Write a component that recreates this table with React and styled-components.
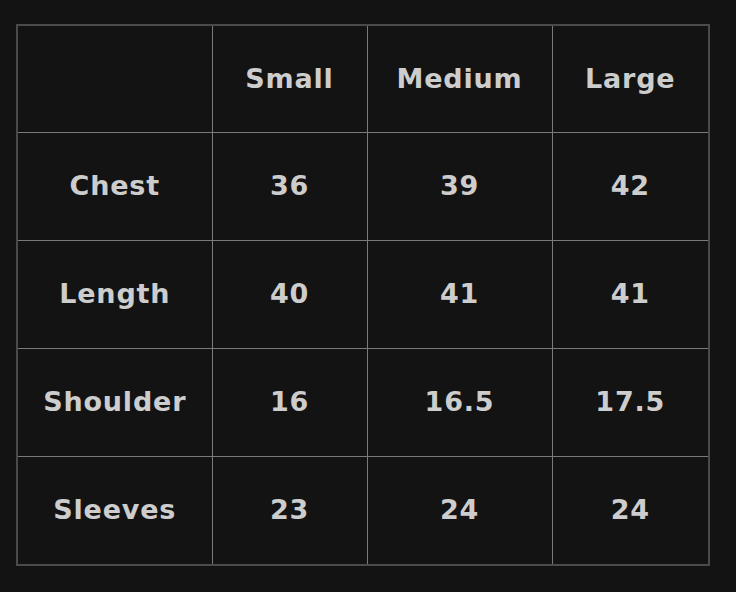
import styled, { createGlobalStyle } from "styled-components";

const GlobalStyle = createGlobalStyle`
  html, body {
    margin: 0;
    background: #131313;
  }
`;

const sizes = ["Small", "Medium", "Large"];

const rows = [
  { label: "Chest", values: ["36", "39", "42"] },
  { label: "Length", values: ["40", "41", "41"] },
  { label: "Shoulder", values: ["16", "16.5", "17.5"] },
  { label: "Sleeves", values: ["23", "24", "24"] },
];

const colWidths = [195, 155, 185, 157];

const App = () => {
  return (
    <>
      <GlobalStyle />
      <Page>
        <SizeTable>
          <colgroup>
            {colWidths.map((w, i) => (
              <Col key={i} $width={w} />
            ))}
          </colgroup>
          <thead>
            <tr>
              <Cell as="th" $head />
              {sizes.map((s) => (
                <Cell as="th" key={s} $head>
                  {s}
                </Cell>
              ))}
            </tr>
          </thead>
          <tbody>
            {rows.map((row) => (
              <tr key={row.label}>
                <Cell as="th">{row.label}</Cell>
                {row.values.map((v, i) => (
                  <Cell key={i}>{v}</Cell>
                ))}
              </tr>
            ))}
          </tbody>
        </SizeTable>
      </Page>
    </>
  );
};
export default App;

const Page = styled.div`
  padding: 24px 26px 0 16px;
`;

const SizeTable = styled.table`
  width: 692px;
  table-layout: fixed;
  border-collapse: collapse;
  border: 2px solid #4a4a4a;
  font-family: "DejaVu Sans", "Liberation Sans", sans-serif;
`;

const Col = styled.col`
  width: ${(p) => p.$width}px;
`;

const Cell = styled.td`
  height: ${(p) => (p.$head ? 104 : 105)}px;
  padding: 0 0 2px;
  border: 1px solid #7a7a7a;
  text-align: center;
  vertical-align: middle;
  color: #cdcdcd;
  font-size: 27px;
  font-weight: 700;
  letter-spacing: 0.8px;
`;
